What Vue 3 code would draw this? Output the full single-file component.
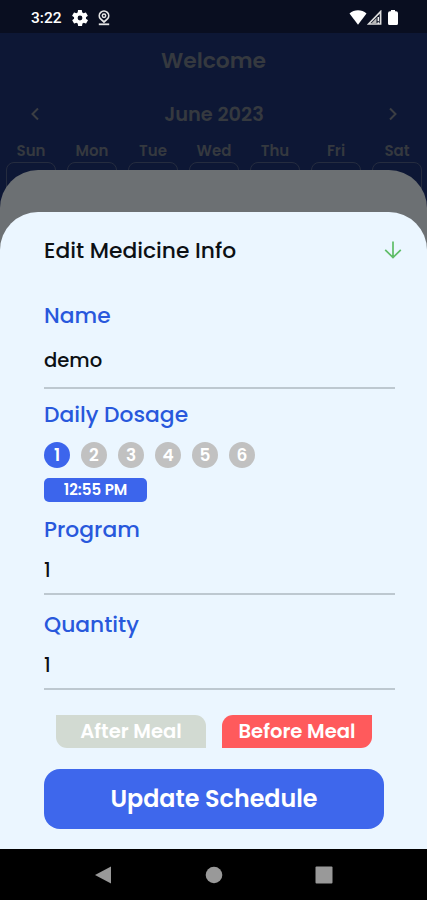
<template>
  <div class="screen">
    <header class="status-bar">
      <span class="clock">3:22</span>
      <svg class="status-gear" viewBox="2 2 20 20">
        <path fill="#fff" fill-rule="evenodd" d="M19.4 13c.1-.3.1-.7.1-1s0-.7-.1-1l2.1-1.6c.2-.2.2-.4.1-.6l-2-3.5c-.1-.2-.4-.3-.6-.2l-2.5 1a7.3 7.3 0 0 0-1.7-1l-.4-2.6A.5.5 0 0 0 14 2h-4c-.3 0-.5.2-.5.4l-.4 2.7c-.6.2-1.1.6-1.7 1l-2.5-1c-.2-.1-.5 0-.6.2l-2 3.5c-.1.2-.1.5.1.6L4.6 11a8 8 0 0 0 0 2l-2.1 1.6c-.2.2-.2.4-.1.6l2 3.5c.1.2.4.3.6.2l2.5-1c.5.4 1.1.7 1.7 1l.4 2.7c0 .2.2.4.5.4h4c.2 0 .4-.2.5-.4l.4-2.7c.6-.2 1.1-.6 1.7-1l2.5 1c.2.1.5 0 .6-.2l2-3.500c.1-.2.1-.5-.1-.6zM12 15a3 3 0 1 1 0-6 3 3 0 0 1 0 6z" />
      </svg>
      <svg class="status-pin" viewBox="0 0 12 16" fill="none" stroke="#e6e6e6">
        <path d="M6 12 2.600 9a4.700 4.700 0 1 1 6.800 0z" stroke-width="1.700" />
        <circle cx="6" cy="5.700" r="1.700" stroke-width="1.500" />
        <path d="M.800 14.300h10.400" stroke-width="1.800" />
      </svg>
      <span class="spacer"></span>
      <svg class="status-wifi" viewBox="0 0 18 15">
        <path fill="#fff" d="M9 14.700.500 3.600C3 1.300 5.800.300 9 .300s6 1 8.500 3.300z" />
      </svg>
      <svg class="status-signal" viewBox="0 0 15 15">
        <path d="M1.600 14 13.600 1.600V14z" fill="none" stroke="#ddd" stroke-width="1.700" />
        <path d="M4.500 13.200 9.500 8v5.200z" fill="#bbb" />
        <path d="M11.300 7v4.200M11.300 12.200v1.800" stroke="#eee" stroke-width="1.500" />
      </svg>
      <svg class="status-battery" viewBox="0 0 10 15">
        <path fill="#fff" d="M3 0h4v1.300h1Q10 1.300 10 3.300v10.200Q10 15 8.500 15h-7Q0 15 0 13.500V3.300q0-2 2-2h1z" />
      </svg>
    </header>

    <main class="calendar">
      <h1 class="welcome">Welcome</h1>
      <div class="month-row">
        <svg class="chevron" viewBox="0 0 10 14"><path d="M8 1.500 2.500 7 8 12.500" /></svg>
        <span class="month">June 2023</span>
        <svg class="chevron" viewBox="0 0 10 14"><path d="M2 1.500 7.500 7 2 12.500" /></svg>
      </div>
      <div class="week">
        <div v-for="day in days" :key="day" class="day">
          <span class="day-name">{{ day }}</span>
          <span class="day-box"></span>
        </div>
      </div>
    </main>

    <div class="panel"></div>

    <section class="sheet">
      <div class="sheet-header">
        <h2 class="sheet-title">Edit Medicine Info</h2>
        <svg class="arrow-down" viewBox="0 0 18 18"><path d="M9 .5v15.800M1.200 8.800 9 16.500l7.800-7.700" /></svg>
      </div>

      <label class="label label-name">Name</label>
      <div class="field field-name">{{ form.name }}</div>

      <label class="label label-dosage">Daily Dosage</label>
      <div class="doses">
        <button
          v-for="n in 6"
          :key="n"
          class="dose"
          :class="{ active: n === form.dosage }"
          @click="form.dosage = n"
        >{{ n }}</button>
      </div>
      <button class="time">12:55 PM</button>

      <label class="label label-program">Program</label>
      <div class="field field-number">{{ form.program }}</div>

      <label class="label label-quantity">Quantity</label>
      <div class="field field-number">{{ form.quantity }}</div>

      <div class="meals">
        <button class="meal after" :class="{ active: form.meal === 'after' }" @click="form.meal = 'after'">After Meal</button>
        <button class="meal before" :class="{ active: form.meal === 'before' }" @click="form.meal = 'before'">Before Meal</button>
      </div>

      <button class="update">Update Schedule</button>
    </section>

    <nav class="nav-bar">
      <svg viewBox="0 0 18 18"><path d="M17 .5v17L1 9z" /></svg>
      <svg viewBox="0 0 18 18"><circle cx="9" cy="9" r="8.300" /></svg>
      <svg viewBox="0 0 18 18"><rect x=".5" y=".5" width="17" height="17" rx="1" /></svg>
    </nav>
  </div>
</template>

<script setup>
import { reactive } from 'vue';

const days = ['Sun', 'Mon', 'Tue', 'Wed', 'Thu', 'Fri', 'Sat'];

const form = reactive({
  name: 'demo',
  dosage: 1,
  program: 1,
  quantity: 1,
  meal: 'before'
});
</script>

<style>
body {
  margin: 0;
  background: #000;
}
</style>

<style scoped>
.screen {
  position: relative;
  display: flex;
  flex-direction: column;
  width: 427px;
  height: 900px;
  overflow: hidden;
  background: #0d1735;
  font-family: Poppins, Inter, "Liberation Sans", sans-serif;
}
h1,
h2 {
  margin: 0;
}
button {
  padding: 0;
  border: 0;
  color: #fff;
  font-family: inherit;
  cursor: pointer;
}
.status-bar {
  display: flex;
  align-items: center;
  height: 32px;
  padding: 1px 29px 0 31px;
  background: #090e20;
}
.clock {
  width: 41px;
  color: #fff;
  font-family: Roboto, sans-serif;
  font-size: 15.5px;
  font-weight: 500;
  line-height: 34px;
  padding-top: 2px;
}
.status-gear {
  width: 16px;
  height: 16px;
  margin: 1px 10px 0 0;
}
.status-pin {
  width: 12px;
  height: 16px;
  margin-top: 2px;
}
.spacer {
  flex: 1;
}
.status-wifi {
  width: 18px;
  height: 15px;
}
.status-signal {
  width: 15px;
  height: 15px;
  margin-right: 6px;
}
.status-battery {
  width: 10px;
  height: 15px;
}
.calendar {
  flex: 1;
  color: #35393f;
}
.welcome {
  padding-top: 12px;
  font-size: 21.8px;
  font-weight: 600;
  line-height: 32px;
  text-align: center;
}
.month-row {
  display: flex;
  align-items: center;
  justify-content: space-between;
  height: 30px;
  margin-top: 22px;
  padding: 0 29px 0 30px;
}
.month {
  font-size: 19.4px;
  font-weight: 600;
}
.chevron {
  width: 10px;
  height: 14px;
  fill: none;
  stroke: #3b3e43;
  stroke-width: 2;
}
.week {
  display: flex;
  justify-content: space-between;
  margin-top: 12px;
  padding: 0 5px 0 6px;
}
.day {
  display: flex;
  flex-direction: column;
  align-items: center;
  width: 50px;
}
.day-name {
  font-size: 15px;
  font-weight: 600;
  line-height: 20px;
}
.day-box {
  width: 48px;
  height: 60px;
  margin-top: 1px;
  border: 1px solid #252c3f;
  border-radius: 8px;
}
.panel {
  position: absolute;
  top: 170px;
  left: 0;
  right: 0;
  height: 120px;
  border-radius: 38px 38px 0 0;
  background: #6c7073;
}
.sheet {
  position: absolute;
  top: 212px;
  left: 0;
  right: 0;
  bottom: 51px;
  display: flex;
  flex-direction: column;
  align-items: flex-start;
  padding: 0 32px 0 44px;
  border-radius: 38px 38px 0 0;
  background: #ebf6ff;
}
.sheet-header {
  display: flex;
  align-items: center;
  align-self: stretch;
  justify-content: space-between;
  height: 32px;
  margin: 22px -7px 0 0;
}
.sheet-title {
  color: #0c1014;
  font-size: 21.8px;
  font-weight: 500;
}
.arrow-down {
  width: 18px;
  height: 18px;
  stroke: #5fbd68;
  stroke-width: 1.7;
  fill: none;
}
.label {
  height: 32px;
  color: #2858dc;
  font-size: 21.8px;
  font-weight: 500;
  line-height: 32px;
}
.label-name {
  margin-top: 34px;
}
.field {
  align-self: stretch;
  border-bottom: 2px solid #bdc8d0;
  color: #0c1014;
  font-size: 19.6px;
  font-weight: 500;
}
.field-name {
  height: 55px;
  line-height: 56px;
}
.label-dosage {
  margin-top: 10px;
}
.doses {
  display: flex;
  gap: 11px;
  margin-top: 11px;
}
.dose {
  width: 26px;
  height: 26px;
  border-radius: 50%;
  background: #c1c1c1;
  font-size: 17px;
  font-weight: 600;
  line-height: 26px;
}
.dose.active {
  background: #3c65ec;
}
.time {
  width: 103px;
  height: 24px;
  margin-top: 10px;
  border-radius: 5px;
  background: #3c65ec;
  font-size: 15px;
  font-weight: 600;
  line-height: 24px;
}
.label-program {
  margin-top: 12px;
}
.field-number {
  height: 47px;
  font-size: 19px;
  line-height: 50px;
}
.label-quantity {
  margin-top: 14px;
}
.meals {
  display: flex;
  gap: 16px;
  margin: 25px 0 0 12px;
}
.meal {
  width: 150px;
  height: 33px;
  background: #d2dad2;
  font-size: 19.6px;
  font-weight: 600;
  line-height: 33px;
}
.meal.active {
  background: #ff5a5c;
}
.after {
  border-radius: 0 11px 0 11px;
}
.before {
  border-radius: 11px 0 11px 0;
}
.update {
  width: 340px;
  height: 60px;
  margin-top: 21px;
  border-radius: 16px;
  background: #3e67ec;
  font-size: 23.8px;
  font-weight: 600;
  line-height: 60px;
}
.nav-bar {
  display: flex;
  align-items: center;
  justify-content: space-between;
  height: 51px;
  padding: 0 94px;
  background: #000;
}
.nav-bar svg {
  width: 18px;
  height: 18px;
  fill: #999;
}
</style>
